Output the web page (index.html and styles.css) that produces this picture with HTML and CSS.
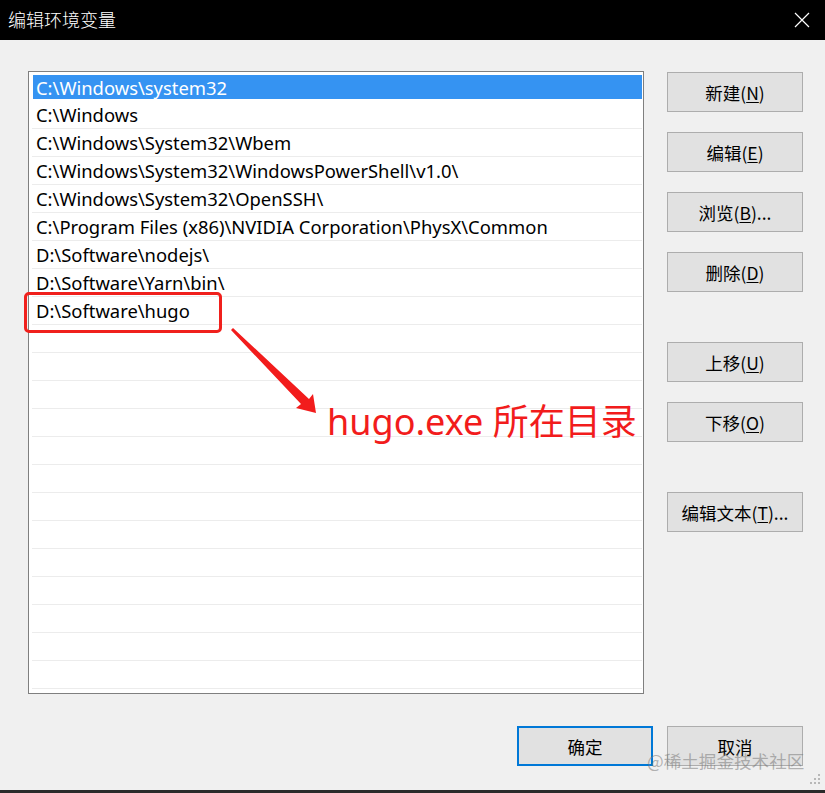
FILE: index.html
```html
<!DOCTYPE html>
<html lang="zh-CN">
<head>
<meta charset="utf-8">
<title>编辑环境变量</title>
<link rel="stylesheet" href="styles.css">
</head>
<body>
<div class="window">
  <div class="titlebar">
    <span class="title">编辑环境变量</span>
    <svg class="close" width="16" height="16" viewBox="0 0 16 16"><path d="M1 1 L15 15 M15 1 L1 15" stroke="#fff" stroke-width="1.2" fill="none"/></svg>
  </div>
  <div class="content">
    <div class="main">
      <div class="list">
        <div class="row sel"><span>C:\Windows\system32</span></div>
        <div class="row"><span>C:\Windows</span></div>
        <div class="row"><span>C:\Windows\System32\Wbem</span></div>
        <div class="row"><span>C:\Windows\System32\WindowsPowerShell\v1.0\</span></div>
        <div class="row"><span>C:\Windows\System32\OpenSSH\</span></div>
        <div class="row"><span>C:\Program Files (x86)\NVIDIA Corporation\PhysX\Common</span></div>
        <div class="row"><span>D:\Software\nodejs\</span></div>
        <div class="row"><span>D:\Software\Yarn\bin\</span></div>
        <div class="row"><span>D:\Software\hugo</span></div>
        <div class="row"></div><div class="row"></div><div class="row"></div><div class="row"></div>
        <div class="row"></div><div class="row"></div><div class="row"></div><div class="row"></div>
        <div class="row"></div><div class="row"></div><div class="row"></div><div class="row"></div>
        <div class="row"></div>
      </div>
      <div class="side">
        <button class="btn">新建(<u>N</u>)</button>
        <button class="btn">编辑(<u>E</u>)</button>
        <button class="btn">浏览(<u>B</u>)...</button>
        <button class="btn">删除(<u>D</u>)</button>
        <button class="btn gap">上移(<u>U</u>)</button>
        <button class="btn">下移(<u>O</u>)</button>
        <button class="btn gap">编辑文本(<u>T</u>)...</button>
      </div>
    </div>
    <div class="footer">
      <button class="btn primary">确定</button>
      <button class="btn">取消</button>
    </div>
  </div>
  <div class="bottomline"></div>

  <div class="mark-box"></div>
  <svg class="arrow" width="100" height="100" viewBox="0 0 100 100">
    <polygon points="1,2 3,0 79,71 83,66 86,85 66,80 71,76" fill="#f21c1c"/>
  </svg>
  <div class="mark-text">hugo.exe 所在目录</div>
  <div class="watermark">@稀土掘金技术社区</div>
  <svg class="grip" width="14" height="14" viewBox="0 0 14 14">
    <g fill="#b8b8b8">
      <rect x="11" y="1" width="2" height="2"/>
      <rect x="7" y="5" width="2" height="2"/><rect x="11" y="5" width="2" height="2"/>
      <rect x="3" y="9" width="2" height="2"/><rect x="7" y="9" width="2" height="2"/><rect x="11" y="9" width="2" height="2"/>
    </g>
  </svg>
</div>
</body>
</html>
```

FILE: styles.css
```css
* { box-sizing: border-box; }
html, body {
  margin: 0;
  padding: 0;
  background: #f0f0f0;
}
body {
  font-family: "Noto Sans", "Noto Sans CJK SC", sans-serif;
  color: #000;
}
.window {
  position: relative;
  width: 825px;
  height: 793px;
  background: #f0f0f0;
  overflow: hidden;
}
.titlebar {
  height: 40px;
  background: #000;
  display: flex;
  align-items: center;
  justify-content: space-between;
  padding: 0 15px 2px 8px;
}
.title {
  color: #fff;
  font-family: "Noto Sans CJK SC", sans-serif;
  font-size: 18px;
  font-weight: 300;
}
.close { display: block; margin-top: 2px; }
.content {
  padding: 31px 0 0 28px;
}
.main {
  display: flex;
  gap: 23px;
}
.list {
  width: 616px;
  height: 623px;
  border: 1px solid #7f7f7f;
  background: #fff;
  padding: 1px 1px 0 3px;
  overflow: hidden;
}
.row {
  height: 28px;
  border-bottom: 1px solid #ececec;
  display: flex;
  align-items: center;
  font-size: 18.4px;
  padding-left: 4px;
  white-space: nowrap;
}
.row.sel {
  background: #3593f2;
  color: #fff;
  border-top: 2px solid #fff;
  border-bottom: 2px solid #fff;
  margin-left: 1px;
  padding-left: 3px;
}
.side {
  display: flex;
  flex-direction: column;
  gap: 20px;
  padding-top: 1px;
}
.btn {
  width: 136px;
  height: 40px;
  background: #e1e1e1;
  border: 1px solid #adadad;
  font-family: "Noto Sans CJK SC", sans-serif;
  font-size: 17.5px;
  color: #000;
  padding: 0;
  margin: 0;
  display: flex;
  align-items: center;
  justify-content: center;
}
.btn u { text-underline-offset: 2px; }
.btn.gap { margin-top: 30px; }
.footer {
  display: flex;
  justify-content: flex-end;
  gap: 14px;
  padding-right: 22px;
  margin-top: 32px;
}
.btn.primary {
  border: 2px solid #0078d7;
}
.bottomline {
  position: absolute;
  left: 0;
  right: 0;
  bottom: 0;
  height: 3px;
  background: #2a2a2a;
}
.mark-box {
  position: absolute;
  left: 24px;
  top: 292px;
  width: 198px;
  height: 41px;
  border: 3px solid #f0201c;
  border-radius: 5px;
}
.arrow {
  position: absolute;
  left: 230px;
  top: 328px;
}
.mark-text {
  position: absolute;
  left: 327px;
  top: 404px;
  color: #f21c1c;
  font-family: "Noto Sans", "Noto Sans CJK SC", sans-serif;
  font-size: 36px;
  line-height: 1;
  white-space: nowrap;
}
.watermark {
  position: absolute;
  left: 647px;
  top: 751px;
  color: rgba(120, 120, 120, 0.55);
  font-family: "Noto Sans CJK SC", sans-serif;
  font-size: 17.6px;
  line-height: 20px;
  white-space: nowrap;
}
.grip {
  position: absolute;
  right: 4px;
  bottom: 6px;
}
```
